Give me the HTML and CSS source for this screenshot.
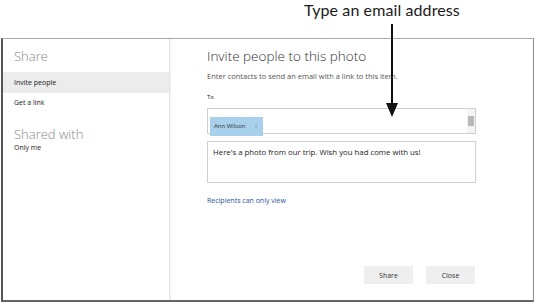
FILE: index.html
```html
<!DOCTYPE html>
<html lang="en">
<head>
  <meta charset="UTF-8" />
  <title>Share</title>
  <link rel="stylesheet" href="styles.css">
</head>
<body>
  <div class="caption">Type an email address</div>
  <div class="arrow"></div>

  <div class="dialog">
    <div class="sidebar">
      <h2>Share</h2>
      <div class="nav-item active">Invite people</div>
      <div class="nav-item">Get a link</div>
      <h2 class="shared">Shared with</h2>
      <div class="only-me">Only me</div>
    </div>

    <div class="main">
      <h1>Invite people to this photo</h1>
      <p class="hint">Enter contacts to send an email with a link to this item.</p>
      <div class="label">To</div>
      <div class="to-box">
        <span class="chip">Ann Wilson <span class="x">&#x2715;</span></span>
        <div class="scroll">
          <span class="up"></span>
          <span class="thumb"></span>
          <span class="down"></span>
        </div>
      </div>
      <div class="message">Here's a photo from our trip. Wish you had come with us!</div>
      <a class="perm" href="#">Recipients can only view</a>
      <div class="buttons">
        <button class="btn">Share</button>
        <button class="btn">Close</button>
      </div>
    </div>
  </div>
</body>
</html>
```

FILE: styles.css
```css
body {
  margin: 0;
  background: #fff;
  font-family: 'Open Sans', 'Noto Sans', sans-serif;
  color: #222;
  width: 535px;
  height: 303px;
  position: relative;
  overflow: hidden;
}
.caption {
  font-family: Lato, 'DejaVu Sans', sans-serif;
  font-size: 16px;
  color: #1a1a1a;
  padding: 0 0 0 304px;
  height: 35px;
  box-sizing: border-box;
  letter-spacing: 0.1px;
}
.arrow {
  position: absolute;
  left: 391px;
  top: 24px;
  width: 2px;
  height: 82px;
  background: #111;
  z-index: 2;
}
.arrow::after {
  content: '';
  position: absolute;
  left: -5px;
  bottom: -11px;
  border-left: 6px solid transparent;
  border-right: 6px solid transparent;
  border-top: 14px solid #111;
}
.dialog {
  margin: 3px 1px 0 1px;
  height: 264px;
  border: 1px solid #8a8a8a;
  border-left: 2px solid #555;
  border-top: 1px solid #aaa;
  border-bottom: 2px solid #666;
  display: flex;
  box-sizing: border-box;
}
.sidebar {
  width: 166px;
  border-right: 1px solid #e2e2e2;
  box-shadow: 1px 0 2px rgba(0,0,0,0.06);
  padding-top: 8px;
}
.sidebar h2 {
  font-weight: 300;
  font-size: 13px;
  color: #888;
  margin: 0 0 7px 11px;
}
.nav-item {
  font-size: 7px;
  padding: 5px 11px 6px;
  color: #222;
}
.nav-item.active {
  background: #ececec;
  padding: 6px 11px 6px;
}
.sidebar h2.shared {
  margin-top: 12px;
  margin-bottom: 0;
}
.only-me {
  font-size: 7px;
  padding-left: 11px;
}
.main {
  flex: 1;
  padding: 8px 0 0 37px;
  position: relative;
}
.main h1 {
  font-weight: 300;
  font-size: 13.5px;
  color: #333;
  margin: 0 0 6px;
}
.hint {
  font-size: 7.5px;
  color: #555;
  margin: 0 0 12px;
}
.label {
  font-size: 6px;
  margin-bottom: 7px;
}
.to-box {
  width: 269px;
  height: 26px;
  border: 1px solid #cfcfcf;
  box-sizing: border-box;
  position: relative;
  padding: 2px;
}
.chip {
  display: inline-flex;
  align-items: center;
  gap: 9px;
  height: 19px;
  padding: 0 5px 0 4px;
  background: #a9d0ec;
  font-size: 6px;
  color: #333;
}
.chip .x {
  color: #8aa;
  font-size: 5px;
}
.scroll {
  position: absolute;
  right: 0;
  top: 0;
  bottom: 0;
  width: 8px;
  display: flex;
  flex-direction: column;
  background: #f4f4f4;
}
.scroll .up, .scroll .down {
  height: 6px;
}
.scroll .thumb {
  flex: 1;
  background: #b8b8b8;
  margin: 1px 1px;
}
.message {
  margin-top: 7px;
  width: 269px;
  height: 42px;
  border: 1px solid #cfcfcf;
  box-sizing: border-box;
  padding: 5px 5px;
  font-size: 7.8px;
  color: #222;
}
.perm {
  display: block;
  margin-top: 13px;
  font-size: 7px;
  color: #2b579a;
  text-decoration: none;
}
.buttons {
  position: absolute;
  right: 58px;
  bottom: 16px;
  display: flex;
  gap: 13px;
}
.btn {
  width: 49px;
  height: 18px;
  border: none;
  background: #efefef;
  font-family: 'Open Sans', 'Noto Sans', sans-serif;
  font-size: 7px;
  color: #333;
  padding: 0;
}
```
